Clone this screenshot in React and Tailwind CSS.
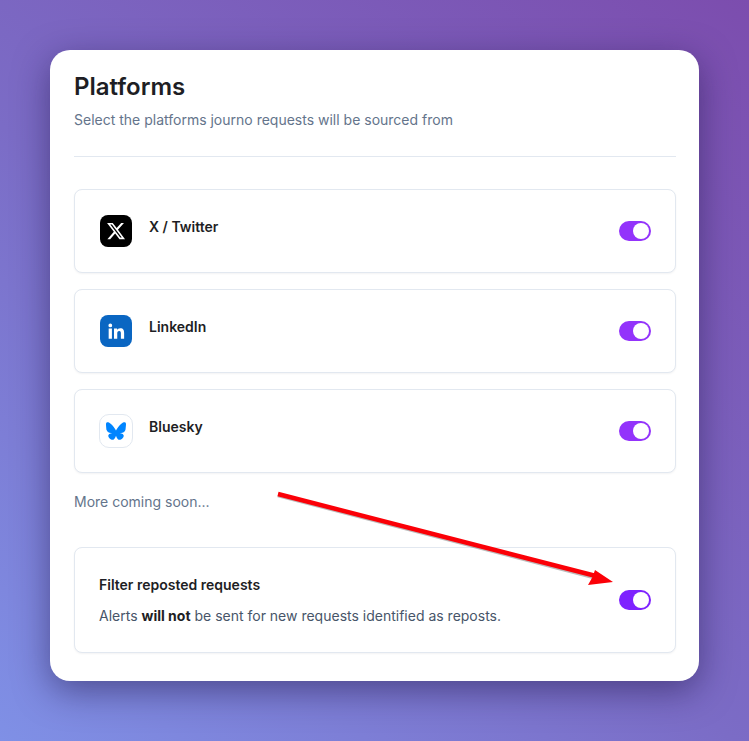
function Toggle({ color = "bg-[#9333fb]" }) {
  return (
    <div className={`flex h-5 w-8 items-center justify-end rounded-full pr-0.5 ${color}`}>
      <div className="h-4 w-4 rounded-full bg-white" />
    </div>
  );
}

function XIcon() {
  return (
    <div className="flex h-8 w-8 items-center justify-center rounded-lg bg-black">
      <svg width="20" height="20" viewBox="0 0 24 24" fill="#fff">
        <path d="M18.244 2.25h3.308l-7.227 8.26 8.502 11.24H16.17l-5.214-6.817L4.99 21.75H1.68l7.73-8.835L1.254 2.25H8.08l4.713 6.231zm-1.161 17.52h1.833L7.084 4.126H5.117z" />
      </svg>
    </div>
  );
}

function LinkedInIcon() {
  return (
    <div className="flex h-8 w-8 items-center justify-center rounded-lg bg-[#0a66c2]">
      <svg width="20" height="20" viewBox="0 0 24 24" fill="#fff">
        <path d="M3.2 9h3.9v12.2H3.2zM5.15 3a2.25 2.25 0 1 1 0 4.5 2.25 2.25 0 0 1 0-4.5zM9.6 9h3.7v1.7h.05c.55-1 1.8-2 3.7-2 3.95 0 4.7 2.5 4.7 5.8v6.7h-3.9v-5.9c0-1.4 0-3.2-1.95-3.2s-2.4 1.5-2.4 3.1v6h-3.9z" />
      </svg>
    </div>
  );
}

function BlueskyIcon() {
  return (
    <div className="-mx-px flex h-[34px] w-[34px] items-center justify-center rounded-[10px] border border-[#e2e8f0] bg-white">
      <svg width="20" height="20" viewBox="0 0 24 24" fill="#0085ff">
        <path d="M5.2 2.900C8 5 11 9.200 12 11.400c1-2.200 4-6.400 6.800-8.500 2-1.500 5.200-2.600 5.200 1 0 .7-.4 6.100-.7 7-.9 3.100-4 3.900-6.800 3.400 4.900.8 6.100 3.600 3.400 6.300-5.100 5.200-7.300-1.300-7.900-3-.1-.3-.1-.4-.0-.4s.1.1 0 .4c-.6 1.700-2.800 8.200-7.900 3-2.700-2.700-1.500-5.500 3.400-6.300-2.800.5-5.900-.3-6.800-3.400C.4 10 0 4.600 0 3.900c0-3.600 3.200-2.500 5.200-1z" />
      </svg>
    </div>
  );
}

function PlatformRow({ icon, name }) {
  return (
    <div className="flex h-[84px] items-center justify-between rounded-lg border border-[#e2e8f0] bg-white pl-[25px] pr-6 shadow-[0_1px_2px_rgba(15,23,42,0.05)]">
      <div className="flex items-center gap-[17px]">
        {icon}
        <div className="mb-2 text-sm font-semibold leading-5 text-[#1e1e24]">{name}</div>
      </div>
      <Toggle />
    </div>
  );
}

export default function App() {
  return (
    <div
      className="relative flex h-[741px] w-[749px] items-start overflow-hidden bg-[linear-gradient(40deg,#7f90e6_0%,#7b6cc6_45%,#7c4dae_100%)] pl-[50px] pt-[50px]"
      style={{ fontFamily: "Inter, sans-serif" }}
    >
      <div className="h-[631px] w-[649px] rounded-[20px] bg-white pl-6 pr-[23px] pt-[21px] shadow-[0_10px_35px_rgba(30,20,70,0.5)]">
        <h1 className="text-2xl leading-8 font-semibold text-[#1e1e24]">Platforms</h1>
        <p className="mt-[5px] text-sm leading-6 text-[#64748b]">
          Select the platforms journo requests will be sourced from
        </p>
        <div className="mt-6 h-px bg-[#e2e8f0]" />
        <div className="mt-8 flex flex-col gap-4">
          <PlatformRow icon={<XIcon />} name="X / Twitter" />
          <PlatformRow icon={<LinkedInIcon />} name="LinkedIn" />
          <PlatformRow icon={<BlueskyIcon />} name="Bluesky" />
        </div>
        <p className="mt-[19px] text-sm leading-5 text-[#64748b]">More coming soon...</p>
        <div className="mt-[35px] flex h-[106px] items-center justify-between rounded-lg border border-[#e2e8f0] bg-white pl-6 pr-6 shadow-[0_1px_2px_rgba(15,23,42,0.05)]">
          <div>
            <div className="text-sm leading-5 font-semibold text-[#1e1e24]">Filter reposted requests</div>
            <p className="mt-[11px] text-sm leading-5 text-[#475569]">
              Alerts <span className="font-bold text-[#1e1e24]">will not</span> be sent for new requests identified as reposts.
            </p>
          </div>
          <Toggle color="bg-[#7e22ff]" />
        </div>
      </div>
      <svg className="absolute left-0 top-0" width="749" height="741" viewBox="0 0 749 741" fill="none">
        <path d="M278 495 L594 577" stroke="#555" strokeOpacity="0.4" strokeWidth="4.500" />
        <path d="M278 494 L594 575.500" stroke="#fb0007" strokeWidth="4.500" />
        <path d="M613 582 L588 585 L592.500 577 L595 570 Z" fill="#fb0007" />
      </svg>
    </div>
  );
}
